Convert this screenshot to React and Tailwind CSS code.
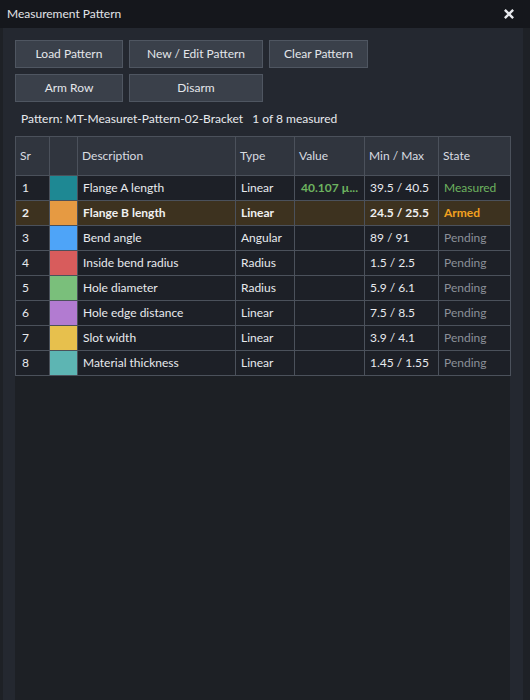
import React from "react";

const rows = [
  { sr: 1, color: "bg-[#1e8893]", desc: "Flange A length", type: "Linear", value: "40.107 µ...", range: "39.5 / 40.5", state: "Measured" },
  { sr: 2, color: "bg-[#e69a42]", desc: "Flange B length", type: "Linear", value: "", range: "24.5 / 25.5", state: "Armed" },
  { sr: 3, color: "bg-[#4ea4f8]", desc: "Bend angle", type: "Angular", value: "", range: "89 / 91", state: "Pending" },
  { sr: 4, color: "bg-[#d85c5c]", desc: "Inside bend radius", type: "Radius", value: "", range: "1.5 / 2.5", state: "Pending" },
  { sr: 5, color: "bg-[#7abf7b]", desc: "Hole diameter", type: "Radius", value: "", range: "5.9 / 6.1", state: "Pending" },
  { sr: 6, color: "bg-[#b27bd1]", desc: "Hole edge distance", type: "Linear", value: "", range: "7.5 / 8.5", state: "Pending" },
  { sr: 7, color: "bg-[#e7c04d]", desc: "Slot width", type: "Linear", value: "", range: "3.9 / 4.1", state: "Pending" },
  { sr: 8, color: "bg-[#5db5b3]", desc: "Material thickness", type: "Linear", value: "", range: "1.45 / 1.55", state: "Pending" },
];

const stateClass = {
  Measured: "text-[#6db35f]",
  Armed: "text-[#f2a11f] font-bold",
  Pending: "text-[#8b9099]",
};

const Btn = ({ children, w }) => (
  <button className={`${w} h-[28px] bg-[#3a404a] border border-[#4f5661] text-[#e4e6ea] text-[12px]`}>
    {children}
  </button>
);

export default function App() {
  return (
    <div
      className="w-[530px] h-[700px] flex flex-col bg-[#1e2126] overflow-hidden"
      style={{ fontFamily: "Lato, 'Noto Sans', sans-serif" }}
    >
      {/* Title bar */}
      <div className="h-[28px] shrink-0 bg-[#15171c] flex items-center justify-between pl-[7px] pr-[16px]">
        <span className="text-[12px] text-[#e2e4e8]">Measurement Pattern</span>
        <svg className="w-[10px] h-[10px]" viewBox="0 0 12 12">
          <path d="M2 2L10 10M10 2L2 10" stroke="#e8eaee" strokeWidth="2.8" strokeLinecap="square" />
        </svg>
      </div>

      {/* Body */}
      <div className="flex-1 flex pl-[3px] pr-[7px] min-h-0">
        <div className="flex-1 flex flex-col bg-[#242830] px-[12px] pt-[12px] min-h-0">
          <div className="flex gap-[6px]">
            <Btn w="w-[108px]">Load Pattern</Btn>
            <Btn w="w-[134px]">New / Edit Pattern</Btn>
            <Btn w="w-[99px]">Clear Pattern</Btn>
          </div>
          <div className="flex gap-[6px] mt-[6px]">
            <Btn w="w-[108px]">Arm Row</Btn>
            <Btn w="w-[134px]">Disarm</Btn>
          </div>
          <div className="h-[34px] flex items-center pl-[6px] text-[12px] text-[#e8eaee]">
            Pattern: MT-Measuret-Pattern-02-Bracket&nbsp;&nbsp;&nbsp;1 of 8 measured
          </div>

          {/* Grid */}
          <div className="flex-1 w-[495px] bg-[#1d2025] min-h-0">
            <table className="table-fixed border-collapse w-[495px] text-[12px]">
              <colgroup>
                <col className="w-[34px]" />
                <col className="w-[28px]" />
                <col className="w-[158px]" />
                <col className="w-[59px]" />
                <col className="w-[70px]" />
                <col className="w-[74px]" />
                <col className="w-[72px]" />
              </colgroup>
              <thead>
                <tr className="h-[39px] bg-[#30353e] text-[#d9dce1]">
                  {["Sr", "", "Description", "Type", "Value", "Min / Max", "State"].map((h, i) => (
                    <th key={i} className="border border-[#4b515b] px-[4px] text-left font-normal">
                      {h}
                    </th>
                  ))}
                </tr>
              </thead>
              <tbody>
                {rows.map((r) => {
                  const armed = r.state === "Armed";
                  return (
                    <tr
                      key={r.sr}
                      className={`h-[25px] ${armed ? "bg-[#3d321f] font-bold text-[#f0f0f0]" : "bg-[#1d2027] text-[#e8eaee]"}`}
                    >
                      <td className="border border-[#4b515b] px-[6px]">{r.sr}</td>
                      <td className={`border border-[#4b515b] ${r.color}`}></td>
                      <td className="border border-[#4b515b] px-[5px] whitespace-nowrap">{r.desc}</td>
                      <td className="border border-[#4b515b] px-[5px]">{r.type}</td>
                      <td className="border border-[#4b515b] px-[6px] text-[#6db35f] font-bold whitespace-nowrap">
                        {r.value}
                      </td>
                      <td className="border border-[#4b515b] px-[5px]">{r.range}</td>
                      <td className={`border border-[#4b515b] px-[5px] ${stateClass[r.state]}`}>{r.state}</td>
                    </tr>
                  );
                })}
              </tbody>
            </table>
          </div>
        </div>
      </div>
    </div>
  );
}
